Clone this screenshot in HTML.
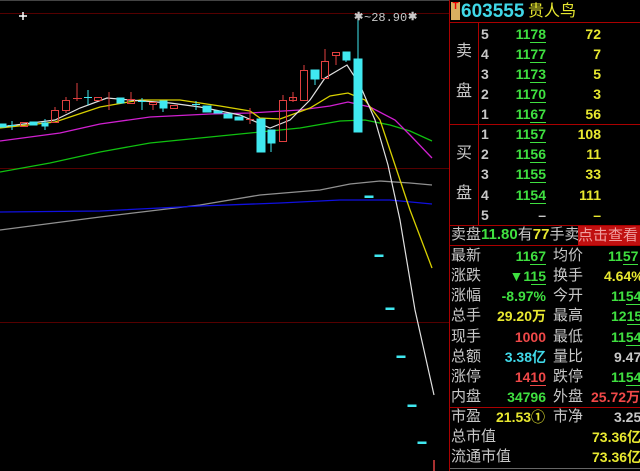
<!DOCTYPE html>
<html><head><meta charset="utf-8"><style>
html,body{margin:0;padding:0;background:#000;width:640px;height:471px;overflow:hidden;position:relative;font-family:"Liberation Sans","Noto Sans CJK SC",sans-serif}
.t{position:absolute;white-space:nowrap;font-size:14px;line-height:16px}
.r{text-align:right}
.g{color:#3fe040;font-weight:bold}.y{color:#e8e830;font-weight:bold}.w{color:#c8c8c8;font-weight:bold}.c{color:#40d8e8;font-weight:bold}.rd{color:#f04848;font-weight:bold}
u{text-decoration:none;border-bottom:1px solid currentColor}
.lb{color:#c8c8c8;font-size:15px;font-weight:normal}
</style></head><body>
<svg width="640" height="471" style="position:absolute;left:0;top:0">
<line x1="0" y1="0.5" x2="449" y2="0.5" stroke="#444"/>
<line x1="0" y1="13.5" x2="449" y2="13.5" stroke="#500"/>
<line x1="0" y1="168.5" x2="449" y2="168.5" stroke="#500"/>
<line x1="0" y1="322.5" x2="449" y2="322.5" stroke="#500"/>
<line x1="449.5" y1="0" x2="449.5" y2="471" stroke="#a00"/>
<line x1="450" y1="22.5" x2="640" y2="22.5" stroke="#a00"/>
<line x1="478.5" y1="22" x2="478.5" y2="225" stroke="#a00"/>
<line x1="450" y1="124.5" x2="640" y2="124.5" stroke="#a00"/>
<line x1="450" y1="225.5" x2="640" y2="225.5" stroke="#a00"/>
<line x1="450" y1="245.5" x2="640" y2="245.5" stroke="#a00"/>
<line x1="450" y1="407.5" x2="640" y2="407.5" stroke="#a00"/>
<line x1="450" y1="468.5" x2="640" y2="468.5" stroke="#666"/>
<polyline fill="none" stroke="#909090" stroke-width="1.3" points="0,230 100,217 200,205 260,195 320,190 350,184 380,181 410,183 432,185"/>
<polyline fill="none" stroke="#1010e0" stroke-width="1.3" points="0,212 100,211 200,206 280,203 340,200 390,200 432,204"/>
<polyline fill="none" stroke="#10c010" stroke-width="1.3" points="0,172 50,163 100,152 150,143 200,138 250,133 300,128 340,121 365,120 390,125 410,131 432,141"/>
<polyline fill="none" stroke="#d020d0" stroke-width="1.3" points="0,141 60,133 100,124 150,117 210,114 250,113 300,110 330,106 348,102 370,107 395,120 410,135 432,158"/>
<polyline fill="none" stroke="#d8d000" stroke-width="1.3" points="0,128 55,122 100,107 140,100 180,100 220,106 250,111 260,118 280,119 310,108 330,96 348,93 365,100 380,120 395,165 410,210 432,268"/>
<polyline fill="none" stroke="#e0e0e0" stroke-width="1.2" points="0,127 55,120 80,108 107,98 130,100 170,103 200,107 240,115 270,128 290,120 310,100 325,78 347,65 360,85 375,120 388,165 400,220 415,310 434,395"/>
<g stroke="#40e8f0" fill="#40e8f0">
<rect x="0" y="124" width="6" height="3"/><line x1="12" y1="121" x2="12" y2="130"/><line x1="8" y1="125.5" x2="16" y2="125.5"/>
<rect x="30" y="122" width="7" height="3"/><rect x="42" y="123" width="6" height="3"/><line x1="45" y1="119" x2="45" y2="130"/>
<line x1="88" y1="90" x2="88" y2="105"/><line x1="84" y1="97.5" x2="92" y2="97.5"/>
<rect x="117" y="98" width="7" height="5"/><line x1="142" y1="98" x2="142" y2="110"/><line x1="138" y1="101.5" x2="146" y2="101.5"/>
<rect x="160" y="101" width="7" height="7"/><line x1="163" y1="108" x2="163" y2="112"/>
<line x1="196" y1="101" x2="196" y2="110"/><line x1="192" y1="104.5" x2="200" y2="104.5"/>
<rect x="203" y="106" width="8" height="6"/><rect x="214" y="111" width="8" height="2"/><rect x="224" y="114" width="8" height="4"/><rect x="235" y="117" width="8" height="3"/>
<rect x="257" y="119" width="8" height="33"/><rect x="268" y="130" width="7" height="13"/><line x1="271" y1="143" x2="271" y2="152"/>
<rect x="311" y="70" width="8" height="9"/><line x1="315" y1="79" x2="315" y2="85"/>
<rect x="343" y="52" width="7" height="8"/><line x1="346" y1="60" x2="346" y2="62"/>
<rect x="354" y="59" width="8" height="73"/><line x1="358" y1="15" x2="358" y2="59"/>
<rect x="365" y="196" width="8" height="1.5"/><rect x="375" y="255" width="8" height="1.5"/><rect x="386" y="308" width="8" height="1.5"/><rect x="397" y="356" width="8" height="1.5"/><rect x="408" y="405" width="8" height="1.5"/><rect x="418" y="442" width="8" height="1.5"/>
</g>
<g stroke="#e04040" fill="none">
<rect x="20.5" y="122.5" width="7" height="4"/>
<rect x="51.5" y="110.5" width="7" height="12"/><line x1="55" y1="107" x2="55" y2="110"/>
<rect x="62.5" y="100.5" width="7" height="10"/><line x1="66" y1="97" x2="66" y2="100"/><line x1="66" y1="111" x2="66" y2="113"/>
<line x1="77" y1="83" x2="77" y2="101"/><line x1="73" y1="98.5" x2="82" y2="98.5"/>
<rect x="94.5" y="97.5" width="7" height="3"/><line x1="109" y1="92" x2="109" y2="110"/>
<rect x="127.5" y="99.5" width="7" height="4"/><line x1="131" y1="92" x2="131" y2="99"/>
<rect x="149.5" y="102.5" width="7" height="2"/><line x1="153" y1="104" x2="153" y2="110"/>
<rect x="170.5" y="105.5" width="7" height="3"/>
<line x1="250" y1="108" x2="250" y2="124"/><line x1="246" y1="119.5" x2="254" y2="119.5"/>
<rect x="279.5" y="100.5" width="7" height="41"/><line x1="283" y1="95" x2="283" y2="100"/>
<rect x="289.5" y="97.5" width="7" height="3"/><line x1="293" y1="92" x2="293" y2="102"/>
<rect x="300.5" y="70.5" width="7" height="30"/><line x1="304" y1="65" x2="304" y2="70"/>
<rect x="321.5" y="61.5" width="7" height="17"/><line x1="325" y1="49" x2="325" y2="61"/>
<rect x="332.5" y="52.5" width="7" height="3"/><line x1="336" y1="55" x2="336" y2="65"/>
<line x1="434" y1="460" x2="434" y2="471" stroke-width="1.5"/>
</g>
<g stroke="#fff" stroke-width="1.5"><line x1="23" y1="12" x2="23" y2="20"/><line x1="19" y1="16" x2="27" y2="16"/></g>
</svg>
<div class="t w" style="left:354px;top:9px;font-size:11px">✱</div>
<div class="t" style="left:364px;top:10px;font-size:12px;color:#c8c8c8;font-family:'Liberation Mono',monospace">~28.90</div>
<div class="t w" style="left:408px;top:9px;font-size:11px">✱</div>

<div style="position:absolute;left:451px;top:2px;width:9px;height:18px;background:#d8b060;color:#e00;font-size:10px;font-weight:bold;line-height:10px;text-align:center">T</div>
<div class="t c" style="left:461px;top:2px;font-size:19px;line-height:20px;font-weight:bold">603555</div>
<div class="t" style="left:528px;top:3px;font-size:16px;line-height:18px;color:#e8e830">贵人鸟</div>

<div class="t lb" style="left:456px;top:44px;font-size:16px">卖</div>
<div class="t lb" style="left:456px;top:84px;font-size:16px">盘</div>
<div class="t lb" style="left:456px;top:146px;font-size:16px">买</div>
<div class="t lb" style="left:456px;top:186px;font-size:16px">盘</div>

<div class="t w" style="left:481px;top:26px">5</div><div class="t g r" style="left:500px;width:46px;top:26px">11<u>78</u></div><div class="t y r" style="left:560px;width:41px;top:26px">72</div>
<div class="t w" style="left:481px;top:46px">4</div><div class="t g r" style="left:500px;width:46px;top:46px">11<u>77</u></div><div class="t y r" style="left:560px;width:41px;top:46px">7</div>
<div class="t w" style="left:481px;top:66px">3</div><div class="t g r" style="left:500px;width:46px;top:66px">11<u>73</u></div><div class="t y r" style="left:560px;width:41px;top:66px">5</div>
<div class="t w" style="left:481px;top:86px">2</div><div class="t g r" style="left:500px;width:46px;top:86px">11<u>70</u></div><div class="t y r" style="left:560px;width:41px;top:86px">3</div>
<div class="t w" style="left:481px;top:106px">1</div><div class="t g r" style="left:500px;width:46px;top:106px">11<u>67</u></div><div class="t y r" style="left:560px;width:41px;top:106px">56</div>
<div class="t w" style="left:481px;top:126px">1</div><div class="t g r" style="left:500px;width:46px;top:126px">11<u>57</u></div><div class="t y r" style="left:560px;width:41px;top:126px">108</div>
<div class="t w" style="left:481px;top:146px">2</div><div class="t g r" style="left:500px;width:46px;top:146px">11<u>56</u></div><div class="t y r" style="left:560px;width:41px;top:146px">11</div>
<div class="t w" style="left:481px;top:166px">3</div><div class="t g r" style="left:500px;width:46px;top:166px">11<u>55</u></div><div class="t y r" style="left:560px;width:41px;top:166px">33</div>
<div class="t w" style="left:481px;top:187px">4</div><div class="t g r" style="left:500px;width:46px;top:187px">11<u>54</u></div><div class="t y r" style="left:560px;width:41px;top:187px">111</div>
<div class="t w" style="left:481px;top:207px">5</div><div class="t w r" style="left:500px;width:46px;top:207px">–</div><div class="t y r" style="left:560px;width:41px;top:207px">–</div>

<div class="t" style="left:451px;top:227px;font-size:15px"><span class="lb">卖盘</span><span class="g">11.80</span><span class="lb">有</span><span class="y">77</span><span class="lb">手卖</span></div>
<div class="t" style="left:578px;top:226px;width:62px;height:19px;background:#c01010;color:#f0a0a0;font-size:15px;line-height:19px">点击查看</div>

<div class="t lb" style="left:451px;top:248px">最新</div><div class="t g r" style="left:490px;width:56px;top:248px">11<u>67</u></div><div class="t lb" style="left:553px;top:248px">均价</div><div class="t g" style="left:608px;top:248px">11<u>57</u></div>
<div class="t lb" style="left:451px;top:268px">涨跌</div><div class="t g r" style="left:490px;width:56px;top:268px">▼1<u>15</u></div><div class="t lb" style="left:553px;top:268px">换手</div><div class="t y" style="left:604px;top:268px">4.64%</div>
<div class="t lb" style="left:451px;top:288px">涨幅</div><div class="t g r" style="left:490px;width:56px;top:288px">-8.97%</div><div class="t lb" style="left:553px;top:288px">今开</div><div class="t g" style="left:611px;top:288px">11<u>54</u></div>
<div class="t lb" style="left:451px;top:308px">总手</div><div class="t y r" style="left:490px;width:56px;top:308px">29.20万</div><div class="t lb" style="left:553px;top:308px">最高</div><div class="t g" style="left:611px;top:308px">12<u>15</u></div>
<div class="t lb" style="left:451px;top:329px">现手</div><div class="t rd r" style="left:490px;width:56px;top:329px">1000</div><div class="t lb" style="left:553px;top:329px">最低</div><div class="t g" style="left:611px;top:329px">11<u>54</u></div>
<div class="t lb" style="left:451px;top:349px">总额</div><div class="t c r" style="left:490px;width:56px;top:349px">3.38亿</div><div class="t lb" style="left:553px;top:349px">量比</div><div class="t w" style="left:614px;top:349px">9.47</div>
<div class="t lb" style="left:451px;top:369px">涨停</div><div class="t rd r" style="left:490px;width:56px;top:369px">14<u>10</u></div><div class="t lb" style="left:553px;top:369px">跌停</div><div class="t g" style="left:611px;top:369px">11<u>54</u></div>
<div class="t lb" style="left:451px;top:389px">内盘</div><div class="t g r" style="left:490px;width:56px;top:389px">34796</div><div class="t lb" style="left:553px;top:389px">外盘</div><div class="t rd" style="left:591px;top:389px">25.72万</div>

<div class="t lb" style="left:451px;top:409px">市盈</div><div class="t y" style="left:496px;top:409px">21.53①</div><div class="t lb" style="left:553px;top:409px">市净</div><div class="t w" style="left:614px;top:409px">3.25</div>
<div class="t lb" style="left:451px;top:429px">总市值</div><div class="t y" style="left:592px;top:429px">73.36亿</div>
<div class="t lb" style="left:451px;top:449px">流通市值</div><div class="t y" style="left:592px;top:449px">73.36亿</div>
</body></html>
